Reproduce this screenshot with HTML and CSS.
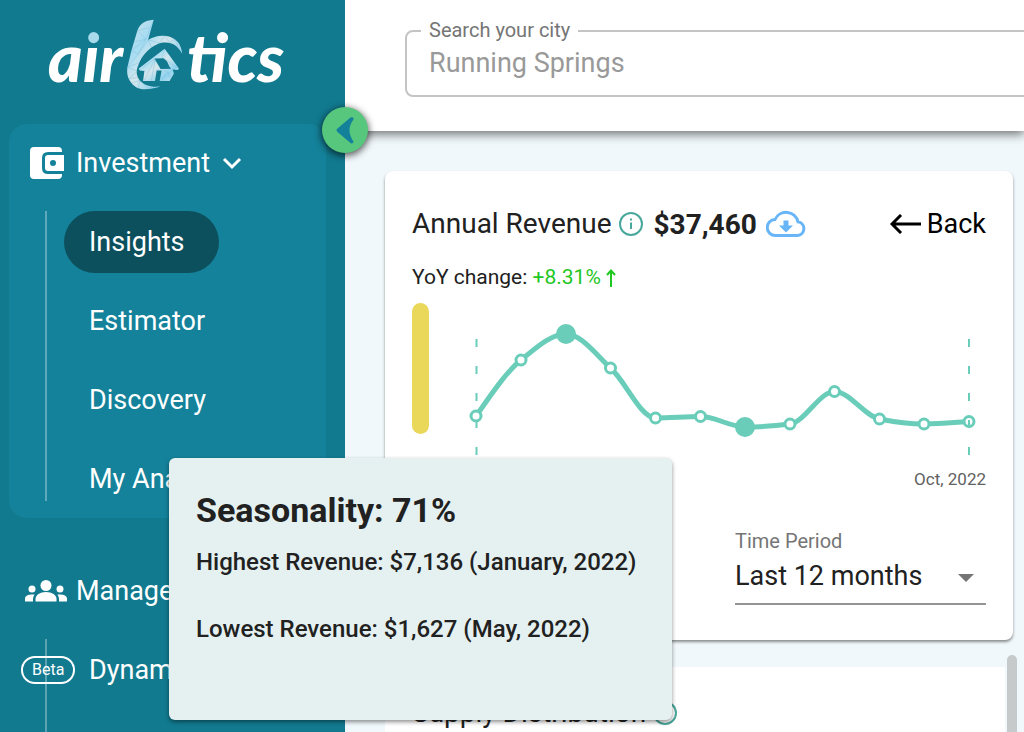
FILE: index.html
```html
<!DOCTYPE html>
<html lang="en">
<head>
<meta charset="utf-8">
<title>Airbtics</title>
<link rel="stylesheet" href="styles.css">
</head>
<body>
<div class="app">
  <aside class="sidebar">
    <a class="logo" href="#" aria-label="airbtics">
      <span class="logo-word">a<span class="logo-i">i</span>r</span>
      <svg class="logo-mark" viewBox="24 16 174 220" aria-hidden="true">
        <defs>
          <linearGradient id="ice" x1="0" y1="0" x2="1" y2="1">
            <stop offset="0" stop-color="#d3e3ea"/><stop offset=".3" stop-color="#a5dcf2"/>
            <stop offset=".5" stop-color="#d5e6ec"/><stop offset=".75" stop-color="#8fd2ee"/>
            <stop offset="1" stop-color="#d0e4eb"/>
          </linearGradient>
        </defs>
        <path fill="url(#ice)" d="M107 21C79 23 65 34 58 54L40 114L28 164C25 184 29 199 40 212C52 227 65 231 80 231C99 231 116 227 127 222C100 226 77 218 65 204C55 191 53 177 60 160C72 126 100 96 135 90C160 87 180 98 193 124C191 96 176 75 145 70C124 67 105 72 90 82Z"/>
        <path fill="none" stroke="#6fb6d3" stroke-width="1" d="M58 54L84 80L107 21M58 54L94 45M48 88L84 80L60 125L40 114L84 80M60 125L90 82L100 104M60 125L28 164L66 150M28 164L58 176L32 199L60 195M40 212L65 204L60 229M65 204L92 229L105 222M90 82L125 91L140 70L155 90L171 79L180 103"/>
        <path fill="url(#ice)" d="M140 109L183 168L180 173L164 171L168 183L155 206H125L131 174H116L111 206H75L79 176L65 174L62 168Z"/>
        <path fill="#117a8f" d="M109 138L137 137L147 146L155 164L160 169L128 170Z"/>
        <path fill="none" stroke="#6fb6d3" stroke-width="1" d="M140 109L132 136M112 138L100 204M112 138L78 204M112 138L75 165M137 137L176 165M150 180L130 204M150 180L158 198M150 180L136 174"/>
      </svg>
      <span class="logo-word">t<span class="logo-i">i</span>cs</span>
    </a>

    <nav class="nav">
      <section class="group group-open">
        <button class="group-head" type="button">
          <svg class="icon-wallet" viewBox="0 0 34 32" aria-hidden="true">
            <path fill="#fff" d="M4 0H28Q32 0 32 4V5H18Q12 5 12 11V21Q12 27 18 27H32V28Q32 32 28 32H4Q0 32 0 28V4Q0 0 4 0Z"/>
            <path fill="#fff" fill-rule="evenodd" d="M18 8H34V24H18Q15 24 15 21V11Q15 8 18 8ZM23 13A3 3 0 0 0 23 19A3 3 0 0 0 23 13Z"/>
          </svg>
          Investment
          <svg class="icon-chevron" viewBox="0 0 20 13" aria-hidden="true"><path d="M2 2L10 10L18 2"/></svg>
        </button>
        <ul class="links links-marked">
          <li><a class="link link-active" href="#">Insights</a></li>
          <li><a class="link" href="#">Estimator</a></li>
          <li><a class="link" href="#">Discovery</a></li>
          <li><a class="link" href="#">My Analysis</a></li>
        </ul>
      </section>
      <section class="group">
        <button class="group-head group-head-wide" type="button">
          <svg class="icon-people" viewBox="0 0 42 22" aria-hidden="true" fill="#fff">
            <circle cx="21" cy="5.500" r="5.500"/><circle cx="7" cy="9" r="3.500"/><circle cx="35" cy="9" r="3.500"/>
            <path d="M10.500 21.500V19C10.500 15 15 12 21 12S31.500 15 31.500 19V21.500Z"/>
            <path d="M0 21.500V18.500C0 15.500 4 14 9.500 14.500Q8 17 8 19V21.500Z"/>
            <path d="M42 21.500V18.500C42 15.500 38 14 32.500 14.500Q34 17 34 19V21.500Z"/>
          </svg>
          Management
        </button>
        <ul class="links links-long">
          <li><span class="beta">Beta</span><a class="link" href="#">Dynamic</a></li>
        </ul>
      </section>
    </nav>
    <button class="toggle" type="button" aria-label="Collapse menu">
      <svg viewBox="0 0 46 46" aria-hidden="true"><path fill="#14819a" d="M15.500 21.500L28.500 10.500Q31 9.500 31.500 11.500L31.500 12.500Q23.500 23 31.500 34.500Q31 37.500 28.500 36L15.500 25Q13.500 23 15.500 21.500Z"/></svg>
    </button>
  </aside>

  <div class="main">
    <header class="topbar">
      <fieldset class="field">
        <legend><label for="city">Search your city</label></legend>
        <input id="city" type="text" placeholder="Running Springs">
      </fieldset>
    </header>

    <main class="content">
      <section class="card">
        <div class="card-head">
          <h2 class="title">Annual Revenue</h2>
          <svg class="icon-info" viewBox="0 0 24 24" aria-hidden="true"><circle cx="12" cy="12" r="11"/><path d="M12 10.500V17M12 6.500V8.500"/></svg>
          <strong class="amount">$37,460</strong>
          <svg class="icon-cloud" viewBox="0 0 40 28" aria-hidden="true">
            <path fill="none" stroke="#68b5f8" stroke-width="3" d="M9.500 25.500H31.500A6.900 6.900 0 0 0 32 11.800A12.200 12.200 0 0 0 9 9.500A8 8 0 0 0 9.500 25.500Z"/>
            <path fill="#68b5f8" d="M17.500 10.500H22.500V15.500H27L20 22.500L13 15.500H17.500Z"/>
          </svg>
          <a class="back" href="#">
            <svg class="icon-back" viewBox="0 0 31 20" aria-hidden="true"><path d="M31 10H2M11 1L2 10L11 19"/></svg>
            Back
          </a>
        </div>
        <p class="change">YoY change: <span class="up">+8.31% <svg class="icon-up" viewBox="0 0 10 18" aria-hidden="true"><path d="M5 18V2M1 6L5 1.500L9 6"/></svg></span></p>
        <div class="chart-row">
          <div class="season-bar"></div>
          <svg class="chart" viewBox="0 0 526 153" role="img" aria-label="Monthly revenue">
            <path class="curve" d="M16.500 113C31.500 92 46.500 69 61.500 57C76.500 45 91.500 31 106.500 31C121.500 31 136 51 151 65C166 78 181 115 196 115C211 115 226 113.500 241 113.500C256 113.500 270.500 124 285.500 124C300.500 124 315.500 123 330.500 121C345.500 119 360 88.500 375 88.500C390 88.500 405 113 420 116C435 119 449.500 121 464.500 121C479.500 121 494.500 119.500 509.500 118.500"/>
            <path class="guide" d="M17 36V153"/>
            <g class="dots">
              <circle cx="16.500" cy="113" r="5"/><circle cx="61.500" cy="57" r="5"/><circle cx="151" cy="65" r="5"/><circle cx="196" cy="115" r="5"/>
              <circle cx="241" cy="113.500" r="5"/><circle cx="330.500" cy="121" r="5"/><circle cx="375" cy="88.500" r="5"/>
              <circle cx="420" cy="116" r="5"/><circle cx="464.500" cy="121" r="5"/><circle cx="509.500" cy="118.500" r="5"/>
            </g>
            <path class="guide" d="M509.500 36V153"/>
            <g class="peaks"><circle cx="106.500" cy="31" r="10"/><circle cx="285.500" cy="124" r="10"/></g>
          </svg>
        </div>
        <div class="axis">Oct, 2022</div>
        <div class="period">
          <label for="period">Time Period</label>
          <div class="select-box">
            <select id="period"><option>Last 12 months</option></select>
            <svg class="icon-caret" viewBox="0 0 16 8" aria-hidden="true"><path fill="#757575" d="M0 0H16L8 8Z"/></svg>
          </div>
        </div>
      </section>

      <div class="scroller">
        <section class="card card-next">
          <div class="card-head">
            <h2 class="title">Supply Distribution</h2>
            <svg class="icon-info" viewBox="0 0 24 24" aria-hidden="true"><circle cx="12" cy="12" r="11"/><path d="M12 10.500V17M12 6.500V8.500"/></svg>
          </div>
        </section>
        <div class="thumb"></div>
      </div>
    </main>
  </div>

  <div class="tooltip" role="tooltip">
    <h3>Seasonality: 71%</h3>
    <p>Highest Revenue: $7,136 (January, 2022)</p>
    <p>Lowest Revenue: $1,627 (May, 2022)</p>
  </div>
</div>
</body>
</html>
```
FILE: styles.css
```css
* { box-sizing: border-box; }
body {
  margin: 0;
  font-family: Roboto, "Liberation Sans", sans-serif;
  color: #212121;
}
h2, h3, p, ul { margin: 0; padding: 0; }
ul { list-style: none; }
a { color: inherit; text-decoration: none; }
button, input, select { font: inherit; color: inherit; }
svg { flex: none; display: block; }

.app {
  position: relative;
  display: flex;
  height: 100vh;
  overflow: hidden;
}

/* Sidebar */
.sidebar {
  position: relative;
  z-index: 2;
  flex: none;
  width: 345px;
  background: #117a8f;
  color: #fff;
}
.logo {
  display: flex;
  align-items: flex-start;
  gap: 3px;
  height: 124px;
  padding: 18px 0 0 48px;
}
.logo-word {
  font: italic 900 66px/78px Lato, sans-serif;
}
/* The dot of each i takes the ice tint, the stem stays white */
.logo-i {
  background: linear-gradient(#a9daec 38%, #fff 38%);
  background-clip: text;
  color: transparent;
}
.logo-mark { width: 58px; height: 73px; }

.nav { display: flex; flex-direction: column; gap: 42px; }
.group {
  display: flex;
  flex-direction: column;
  gap: 17px;
  margin: 0 19px 0 9px;
}
.group-open {
  padding: 8px 0;
  border-radius: 18px;
  background: #14829a;
}
.group-head {
  display: flex;
  align-items: center;
  gap: 12px;
  height: 62px;
  padding: 0 0 0 21px;
  border: 0;
  background: none;
  font-size: 27px;
}
.group-head-wide { gap: 9px; padding-left: 16px; }
.icon-wallet { width: 34px; height: 32px; }
.icon-people { width: 42px; height: 22px; }
.icon-chevron { width: 20px; height: 13px; }
.icon-chevron path { fill: none; stroke: #fff; stroke-width: 3; }

.links {
  display: flex;
  flex-direction: column;
  gap: 17px;
  background: linear-gradient(#ffffff50, #ffffff50) 36px 0 / 2px 100% no-repeat;
}
.links-marked { background-size: 2px calc(100% - 9px); }
.links-long { padding-bottom: 79px; }
.links li { position: relative; display: flex; padding-left: 55px; }
.link {
  padding: 0 34px 0 25px;
  border-radius: 31px;
  font-size: 27px;
  line-height: 62px;
}
.link-active { background: #0d505d; }
.beta {
  position: absolute;
  top: 17px;
  left: 12px;
  padding: 0 9px;
  border: 2px solid #fff;
  border-radius: 14px;
  font-size: 16px;
  line-height: 24px;
}
.toggle {
  position: absolute;
  top: 107px;
  right: -23px;
  width: 46px;
  height: 46px;
  padding: 0;
  border: 0;
  border-radius: 50%;
  background: #57c77d;
  box-shadow: 0 2px 7px 1px #000000a0;
}

/* Main column */
.main {
  display: flex;
  flex: 1;
  flex-direction: column;
  min-width: 0;
  background: #f1f8fb;
}
.topbar {
  z-index: 1;
  flex: none;
  padding: 19px 0 34px 60px;
  background: #fff;
  box-shadow: 0 3px 10px #00000090;
}
.field {
  height: 78px;
  margin: 0 -24px 0 0;
  padding: 0 22px;
  border: 2px solid #c4c4c4;
  border-radius: 8px;
}
.field legend {
  margin-left: -8px;
  padding: 0 8px;
  color: #757575;
  font-size: 20px;
  line-height: 23px;
}
.field input {
  width: 100%;
  height: 42px;
  padding: 0;
  border: 0;
  outline: 0;
  background: none;
  font-size: 27px;
}
.field input::placeholder { color: #999; opacity: 1; }

.content { flex: 1; padding: 40px 7px 0 40px; }
.card {
  margin-right: 4px;
  padding: 27px;
  border-radius: 8px;
  background: #fff;
  box-shadow: 0 2px 3px #00000070;
}
.content > .card { padding-bottom: 35px; }
.card-head { display: flex; align-items: center; gap: 7px; height: 52px; }
.title { font-size: 28px; font-weight: 400; line-height: 34px; white-space: nowrap; }
.icon-info { width: 24px; height: 24px; }
.icon-info circle, .icon-info path { fill: none; stroke: #4aa79c; stroke-width: 2; }
.amount { margin-left: 4px; font-size: 28px; font-weight: 700; }
.icon-cloud { width: 40px; height: 28px; margin-left: 2px; }
.back {
  display: flex;
  align-items: center;
  gap: 6px;
  margin-left: auto;
  color: #000;
  font-size: 27px;
}
.icon-back { width: 31px; height: 20px; }
.icon-back path { fill: none; stroke: #000; stroke-width: 3; }
.change { padding-top: 14px; font-size: 21px; line-height: 26px; }
.up { color: #1fc71f; }
.icon-up { display: inline-block; width: 10px; height: 18px; vertical-align: -3px; }
.icon-up path { fill: none; stroke: #1fc71f; stroke-width: 2; }

.chart-row { display: flex; gap: 30px; padding-top: 13px; }
.season-bar { width: 17px; height: 131px; border-radius: 9px; background: #ead85a; }
.chart { flex: 1; min-width: 0; height: 153px; }
.curve { fill: none; stroke: #69cdb9; stroke-width: 5; }
.guide { fill: none; stroke: #69cdb9; stroke-width: 2; stroke-dasharray: 8 19; }
.dots { fill: #fff; stroke: #69cdb9; stroke-width: 3; }
.peaks { fill: #69cdb9; }
.axis { padding-top: 13px; color: #616161; font-size: 17px; line-height: 20px; text-align: right; }
.period { width: 251px; margin: 40px 0 0 auto; }
.period label { display: block; color: #757575; font-size: 20px; line-height: 24px; }
.select-box {
  display: flex;
  align-items: center;
  padding-right: 12px;
  border-bottom: 2px solid #949494;
}
.select-box select {
  flex: 1;
  height: 50px;
  padding: 0 0 4px;
  border: 0;
  background: none;
  appearance: none;
  font-size: 27px;
}
.icon-caret { width: 16px; height: 8px; }

.scroller { display: flex; align-items: flex-start; gap: 2px; padding-top: 15px; }
.card-next {
  flex: 1;
  height: 300px;
  margin: 12px 0 0;
  padding-top: 20px;
  border-radius: 0;
  box-shadow: none;
}
.thumb { width: 10px; height: 200px; border-radius: 5px; background: #c6cacb; }

.tooltip {
  position: absolute;
  z-index: 3;
  top: 458px;
  left: 169px;
  width: 503px;
  height: 262px;
  padding: 32px 27px;
  border-radius: 6px;
  background: #e5f1f1;
  box-shadow: 0 2px 4px #00000070;
}
.tooltip h3 { font-size: 34px; line-height: 40px; }
.tooltip p { padding-top: 16px; font-size: 24px; font-weight: 500; line-height: 32px; }
.tooltip p + p { padding-top: 35px; }
```
